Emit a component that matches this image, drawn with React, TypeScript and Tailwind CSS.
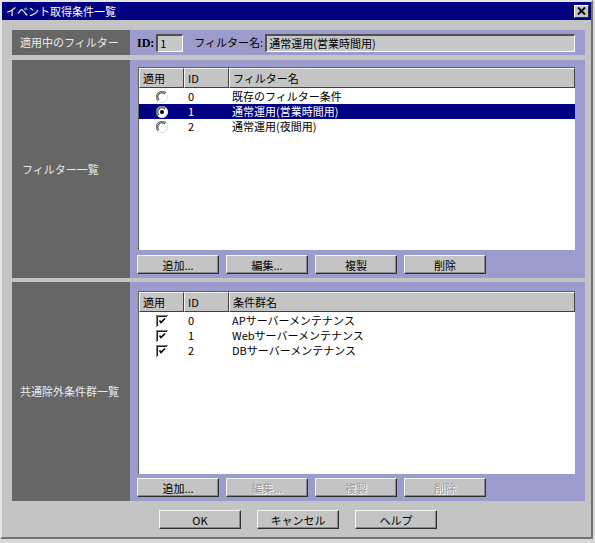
import React from "react";

function Btn({ children, disabled = false }: { children: React.ReactNode; disabled?: boolean }) {
  return (
    <div className="w-[82px] h-[19px] bg-[#c4c4c4] flex items-center justify-center text-[11px] leading-[14px] border-t border-l border-t-[#f4f4f4] border-l-[#f4f4f4] border-r border-b border-r-[#303030] border-b-[#303030] shadow-[inset_-1px_-1px_0_#888888]">
      <span className={disabled ? "text-[#9a9a9a] [text-shadow:1px_1px_0_#ffffff]" : "text-black"}>{children}</span>
    </div>
  );
}

function HeadCell({ children, className }: { children: React.ReactNode; className: string }) {
  return (
    <div className={className + " h-[20px] bg-[#c4c4c4] flex items-center pl-[3px] text-[11px] text-black border-t border-l border-t-[#f4f4f4] border-l-[#f4f4f4] border-r border-b border-r-[#404040] border-b-[#404040]"}>
      {children}
    </div>
  );
}

function Radio({ checked }: { checked: boolean }) {
  return (
    <svg width="12" height="12" viewBox="0 0 12 12">
      <circle cx="6" cy="6" r="5.5" fill="#ffffff" />
      <path d="M10 2 A5.5 5.5 0 0 0 2 10" fill="none" stroke="#808080" strokeWidth="1.2" />
      <path d="M9 3 A4.2 4.2 0 0 0 3 9" fill="none" stroke="#202020" strokeWidth="1" />
      <path d="M2 10 A5.5 5.5 0 0 0 10 2" fill="none" stroke="#e0e0e0" strokeWidth="1" />
      {checked && <circle cx="6" cy="6" r="2" fill="#000000" />}
    </svg>
  );
}

function Check() {
  return (
    <svg width="12" height="12" viewBox="0 0 12 12">
      <rect x="0" y="0" width="12" height="12" fill="#808080" />
      <rect x="1" y="1" width="11" height="11" fill="#ffffff" />
      <rect x="1" y="1" width="10" height="10" fill="#202020" />
      <rect x="2" y="2" width="9" height="9" fill="#ffffff" />
      <path d="M3.5 5.5 L5 7.5 L9 3.5" fill="none" stroke="#000" strokeWidth="1.6" />
    </svg>
  );
}

type Row = { id: string; name: string; sel?: boolean };

function List({ head, rows, kind }: { head: string; rows: Row[]; kind: "radio" | "check" }) {
  return (
    <div className="h-[183px] bg-white border-t border-l border-t-[#606060] border-l-[#606060] flex flex-col">
      <div className="flex">
        <HeadCell className="w-[45px]">適用</HeadCell>
        <HeadCell className="w-[45px]">ID</HeadCell>
        <HeadCell className="flex-1">{head}</HeadCell>
      </div>
      <div className="flex flex-col pt-[1px]">
        {rows.map((r) => (
          <div
            key={r.id}
            className={
              "flex h-[15px] items-center text-[11px] leading-[15px] " +
              (r.sel ? "bg-[#000080] text-white" : "text-black")
            }
          >
            <div className="w-[45px] flex justify-center pl-[1px]">
              {kind === "radio" ? <Radio checked={!!r.sel} /> : <Check />}
            </div>
            <div className="w-[45px] pl-[4px]">{r.id}</div>
            <div className="flex-1 pl-[3px]">{r.name}</div>
          </div>
        ))}
      </div>
    </div>
  );
}

export default function App() {
  return (
    <div className="w-[595px] h-[543px] bg-[#d8d8d8] font-['MS_UI_Gothic','Noto_Sans_CJK_JP',sans-serif]">
      <div className="w-[593px] h-[539px] bg-[#c4c4c4] border-t-2 border-l-2 border-t-[#e4e4e4] border-l-[#e4e4e4] border-r-2 border-b-2 border-r-[#707070] border-b-[#707070] flex flex-col">
        <div className="h-[18px] bg-[#000080] flex items-center justify-between pl-[4px] pr-[2px]">
          <span className="text-white text-[11px] leading-none">イベント取得条件一覧</span>
          <div className="w-[15px] h-[13px] bg-[#c4c4c4] border-t border-l border-t-white border-l-white border-r border-b border-r-[#303030] border-b-[#303030] flex items-center justify-center">
            <svg width="9" height="8" viewBox="0 0 9 8">
              <path d="M1 0.5 L8 7.5 M8 0.5 L1 7.5" stroke="#000" strokeWidth="1.8" />
            </svg>
          </div>
        </div>

        <div className="flex flex-col pl-[10px] pr-[6px] pt-[10px] gap-[4px]">
          {/* Row 1 */}
          <div className="flex h-[25px]">
            <div className="w-[118px] bg-[#666666] flex items-center pl-[8px] text-[11px] text-[#ececec]">
              適用中のフィルター
            </div>
            <div className="flex-1 bg-[#9c9ccc] flex items-center pl-[7px] pr-[10px] text-[11px] text-black">
              <span className="font-bold font-['Liberation_Serif',serif] text-[12px]">ID:</span>
              <div className="ml-[2px] w-[27px] h-[18px] bg-[#c8c8c8] border-t-2 border-l-2 border-t-[#505050] border-l-[#505050] border-r border-b border-r-white border-b-white flex items-center pl-[2px]">
                1
              </div>
              <span className="ml-[11px]">フィルター名:</span>
              <div className="ml-[2px] flex-1 h-[18px] bg-[#c8c8c8] border-t-2 border-l-2 border-t-[#505050] border-l-[#505050] border-r border-b border-r-white border-b-white flex items-center pl-[2px]">
                通常運用(営業時間用)
              </div>
            </div>
          </div>

          {/* Row 2 */}
          <div className="flex h-[218px] mt-[1px]">
            <div className="w-[118px] bg-[#666666] flex items-center pl-[10px] text-[11px] text-[#ececec]">
              フィルター一覧
            </div>
            <div className="flex-1 bg-[#9c9ccc] flex flex-col pl-[8px] pr-[10px] pt-[7px]">
              <List
                head="フィルター名"
                kind="radio"
                rows={[
                  { id: "0", name: "既存のフィルター条件" },
                  { id: "1", name: "通常運用(営業時間用)", sel: true },
                  { id: "2", name: "通常運用(夜間用)" },
                ]}
              />
              <div className="flex gap-[7px] mt-[5px] -ml-[1px]">
                <Btn>追加...</Btn>
                <Btn>編集...</Btn>
                <Btn>複製</Btn>
                <Btn>削除</Btn>
              </div>
            </div>
          </div>

          {/* Row 3 */}
          <div className="flex h-[219px]">
            <div className="w-[118px] bg-[#666666] flex items-center pl-[8px] text-[11px] text-[#ececec]">
              共通除外条件群一覧
            </div>
            <div className="flex-1 bg-[#9c9ccc] flex flex-col pl-[8px] pr-[10px] pt-[9px]">
              <List
                head="条件群名"
                kind="check"
                rows={[
                  { id: "0", name: "APサーバーメンテナンス" },
                  { id: "1", name: "Webサーバーメンテナンス" },
                  { id: "2", name: "DBサーバーメンテナンス" },
                ]}
              />
              <div className="flex gap-[7px] mt-[4px] -ml-[1px]">
                <Btn>追加...</Btn>
                <Btn disabled>編集...</Btn>
                <Btn disabled>複製</Btn>
                <Btn disabled>削除</Btn>
              </div>
            </div>
          </div>

          <div className="flex gap-[16px] pl-[147px] mt-[5px]">
            <Btn>OK</Btn>
            <Btn>キャンセル</Btn>
            <Btn>ヘルプ</Btn>
          </div>
        </div>
      </div>
    </div>
  );
}
